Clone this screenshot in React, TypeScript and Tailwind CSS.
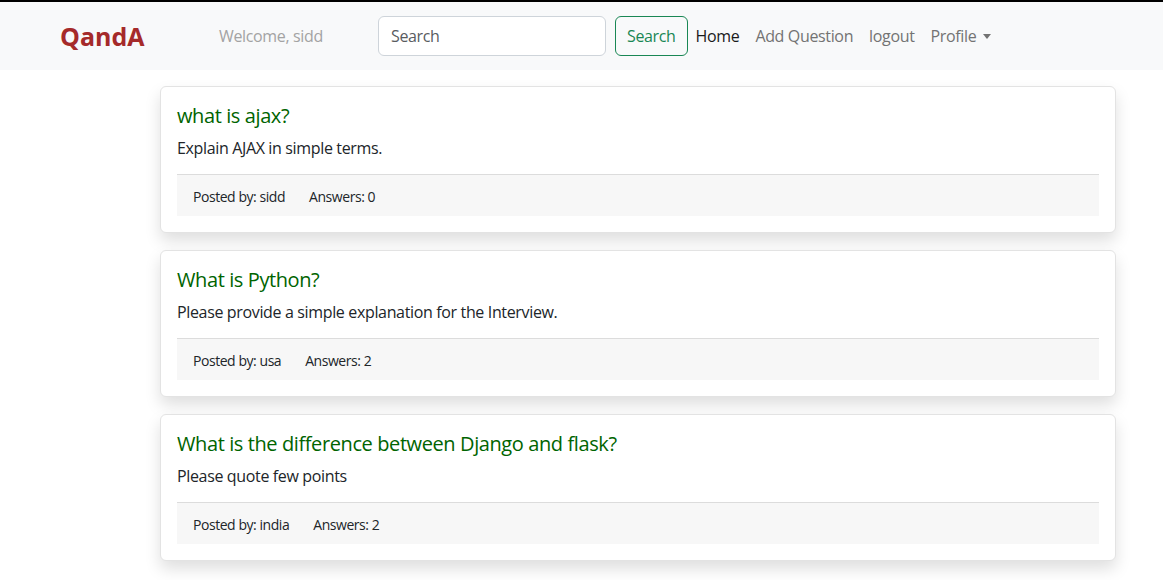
import React from 'react';

const questions = [
    { title: 'what is ajax?', body: 'Explain AJAX in simple terms.', user: 'sidd', answers: 0 },
    { title: 'What is Python?', body: 'Please provide a simple explanation for the Interview.', user: 'usa', answers: 2 },
    { title: 'What is the difference between Django and flask?', body: 'Please quote few points', user: 'india', answers: 2 },
];

function Navbar() {
    return (
        <nav className="flex items-center h-[68px] bg-[#f8f9fa] pl-[60px]">
            <div className="w-[159px] text-[25px] font-bold text-[#a52a2a] leading-none tracking-[0px]">QandA</div>
            <div className="w-[159px] text-[16px] text-[#a3a3a3]">Welcome, sidd</div>
            <input
                type="text"
                placeholder="Search"
                className="w-[228px] h-[40px] rounded-[6px] border border-[#ced4da] bg-white px-3 text-[16px] text-[#212529] placeholder:text-[#595c5f] outline-none"
            />
            <button className="ml-[9px] h-[40px] px-[11px] rounded-[6px] border border-[#198754] text-[16px] text-[#198754]">
                Search
            </button>
            <ul className="flex items-center text-[16px]">
                <li className="px-2 text-[#1a1a1a]">Home</li>
                <li className="px-2 text-[#737373]">Add Question</li>
                <li className="px-2 text-[#737373]">logout</li>
                <li className="px-2 text-[#737373] flex items-center">
                    Profile
                    <span className="ml-[7px] mt-[1px] w-0 h-0 border-l-[4px] border-r-[4px] border-t-[5px] border-l-transparent border-r-transparent border-t-[#737373]"></span>
                </li>
            </ul>
        </nav>
    );
}

function QuestionCard({ q }: { q: any }) {
    return (
        <div className="bg-white border border-[#e3e3e3] rounded-[6px] shadow-[0_8px_16px_rgba(0,0,0,0.13)] p-4">
            <h5 className="text-[20px] leading-[24px] text-[#006400] tracking-[-0.4px] pt-[1px]">{q.title}</h5>
            <p className="mt-[8px] text-[16px] leading-[24px] text-[#212529]">{q.body}</p>
            <div className="mt-[14px] border-t border-[#dcdcdc] bg-[#f7f7f7] h-[42px] pt-[1px] flex items-center px-4 gap-6 text-[14px] text-[#212529] tracking-[-0.45px]">
                <span>Posted by: {q.user}</span>
                <span>Answers: {q.answers}</span>
            </div>
        </div>
    );
}

export default function App() {
    return (
        <div className="min-h-[580px] bg-white border-t-2 border-black tracking-[-0.35px]" style={{ fontFamily: '"Open Sans", "Noto Sans", sans-serif' }}>
            <Navbar />
            <main className="pl-[160px] pt-[16px] pb-8">
                <div className="w-[956px] flex flex-col gap-[17px]">
                    {questions.map((q, i) => (
                        <QuestionCard key={i} q={q} />
                    ))}
                </div>
            </main>
        </div>
    );
}
